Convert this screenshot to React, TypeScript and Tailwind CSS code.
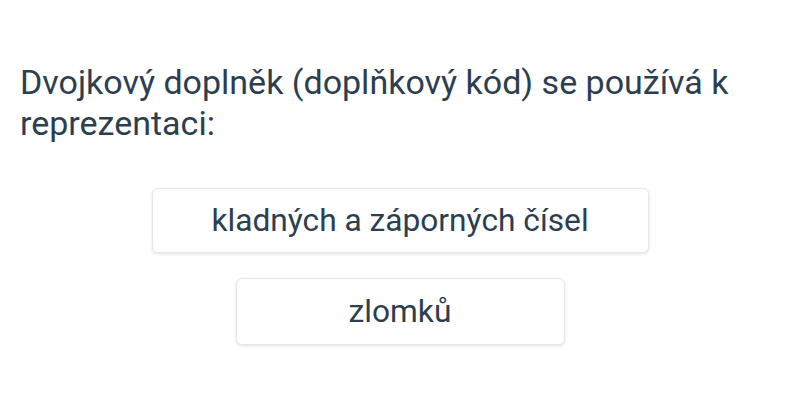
const options = [
  { label: "kladných a záporných čísel", size: "w-[497px] h-[65px]" },
  { label: "zlomků", size: "w-[329px] h-[67px]" },
];

export default function App() {
  return (
    <div className="h-[400px] w-[800px] bg-white font-['Roboto',sans-serif] text-[#2c3e50]">
      <div className="px-5 pt-[62px]">
        <p className="text-[34px] leading-[41px]">
          Dvojkový doplněk (doplňkový kód) se používá k reprezentaci:
        </p>
      </div>
      <div className="mt-[44px] flex flex-col items-center gap-[25px]">
        {options.map((o) => (
          <button
            key={o.label}
            className={`${o.size} rounded-md border border-gray-200 bg-white text-[31.7px] text-[#2c3e50] shadow-[0_1px_3px_rgba(0,0,0,0.12)]`}
          >
            {o.label}
          </button>
        ))}
      </div>
    </div>
  );
}
